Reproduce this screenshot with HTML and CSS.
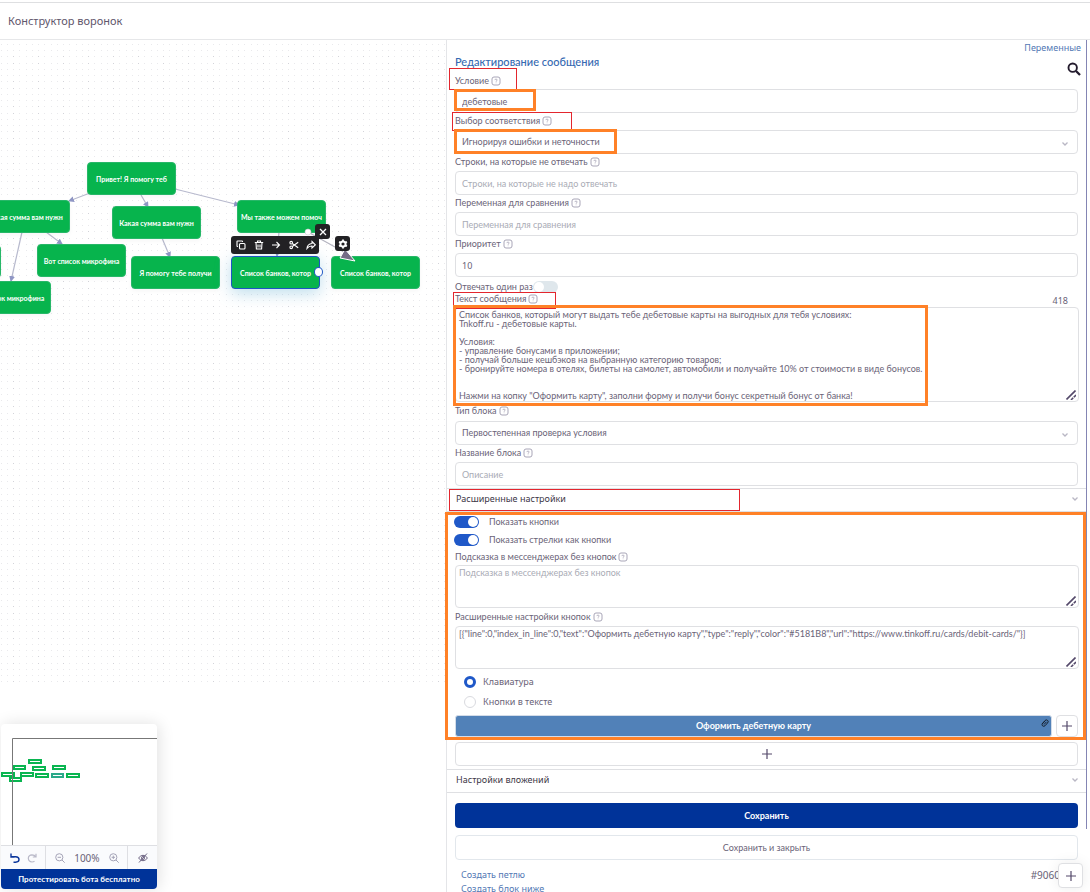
FILE: index.html
```html
<!DOCTYPE html>
<html lang="ru">
<head>
<meta charset="utf-8">
<title>Конструктор воронок</title>
<link rel="stylesheet" href="styles.css">
</head>
<body>
<svg class="sprite" aria-hidden="true">
  <symbol id="help" viewBox="0 0 10 10"><rect x="1" y="1" width="8" height="8" rx="2" fill="none" stroke="#a9a6b8"/><path d="M3.8 4.1q0-1 1.2-1t1.2.9q0 .6-1.1 1.2v.5M5.1 6.6v.6" fill="none" stroke="#a9a6b8" stroke-width=".8"/></symbol>
  <symbol id="chevron" viewBox="0 0 8 6"><path d="M1.5 1.5 4 4l2.500-2.500" fill="none" stroke="#b9b7c4" stroke-width="1.300"/></symbol>
  <symbol id="plus" viewBox="0 0 12 12"><path d="M6 1v10M1 6h10" stroke="#54496a" stroke-width="1.200"/></symbol>
  <symbol id="grip" viewBox="0 0 10 10"><path d="M.5 9.500 9.500.5M5 10l2.200-2.200M7.800 7.200 10 5" stroke="#54496a" stroke-width="1.600"/></symbol>
</svg>

<header class="topbar"><h1 class="topbar-title">Конструктор воронок</h1></header>

<main class="workspace">
  <section class="canvas" aria-label="Схема">
    <svg class="canvas-lines" aria-hidden="true">
      <defs>
        <pattern id="dots" width="25" height="25" patternUnits="userSpaceOnUse">
          <g fill="#e9e9ec">
            <path d="M1 4h1v1H1zM7 4h1v1H7zM13 4h1v1h-1zM19 4h1v1h-1zM1 10h1v1H1zM7 10h1v1H7zM13 10h1v1h-1zM19 10h1v1h-1zM1 16h1v1H1zM7 16h1v1H7zM19 16h1v1h-1zM1 23h1v1H1zM7 23h1v1H7zM19 23h1v1h-1z"/>
            <path fill="#d3d3d9" d="M13 16h1v1h-1zM13 23h1v1h-1z"/>
          </g>
        </pattern>
        <marker id="tip" markerUnits="userSpaceOnUse" markerWidth="6" markerHeight="6" refX="5" refY="3" orient="auto"><path d="M0 0 6 3 0 6z" fill="#8f96c4"/></marker>
      </defs>
      <rect width="100%" height="643" fill="url(#dots)"/>
      <g stroke="#b7b9cd" stroke-width="1.200">
        <path d="M90 153 69 161" marker-end="url(#tip)"/>
        <path d="M141 155 148 167" marker-end="url(#tip)"/>
        <path d="M175 149 239 165" marker-end="url(#tip)"/>
        <path d="M46 192 62 204" marker-end="url(#tip)"/>
        <path d="M22 192 11 241" marker-end="url(#tip)"/>
        <path d="M162 198 170 217" marker-end="url(#tip)"/>
        <path d="M279 192 277 216" marker-end="url(#tip)"/>
      </g>
    </svg>
    <div class="node n1">Привет! Я помогу теб</div>
    <div class="node n2">Какая сумма вам нужн</div>
    <div class="node n3">Какая сумма вам нужн</div>
    <div class="node n4">Вот список микрофина</div>
    <div class="node n5"></div>
    <div class="node n6">Вот список микрофина</div>
    <div class="node n7">Я помогу тебе получи</div>
    <div class="node n8">Мы также можем помоч</div>
    <div class="node n9 selected">Список банков, котор</div>
    <div class="node n10">Список банков, котор</div>
    <svg class="drag-line" viewBox="0 0 56 40" aria-hidden="true"><path d="M6 6 42 26" stroke="#b3b3bf" stroke-width="1.200"/><circle cx="6" cy="6" r="3" fill="#fff" stroke="#c9c9d2" stroke-width=".6"/><path d="M43 23 53 35 38 32z" fill="#756c86" stroke="#fff" stroke-width="1"/></svg>
    <div class="tools">
      <button class="tool" aria-label="Копировать"><svg viewBox="0 0 10 10"><rect x="3.500" y="3.500" width="5.500" height="5.500" rx="1"/><path d="M2 6.500H1.500q-.5 0-.5-.5V1.500Q1 1 1.500 1H6q.5 0 .5.500V2"/></svg></button>
      <button class="tool" aria-label="Удалить"><svg viewBox="0 0 10 10"><path d="M.8 2.500h8.400M3.500 2.500V1h3v1.500M2 2.500 2.400 9h5.200L8 2.500M4 4.500v3M6 4.500v3"/></svg></button>
      <button class="tool" aria-label="Стрелка"><svg viewBox="0 0 10 10"><path d="M1 5h7.500M5.500 2l3 3-3 3"/></svg></button>
      <button class="tool" aria-label="Вырезать"><svg viewBox="0 0 10 10"><circle cx="2.200" cy="2.700" r="1.300"/><circle cx="2.200" cy="7.300" r="1.300"/><path d="M3.300 3.500 9.200 7.800M3.300 6.500 9.200 2.200"/></svg></button>
      <button class="tool" aria-label="Переслать"><svg viewBox="0 0 10 10"><path d="M6 1.500 9.300 4.800 6 8V6Q3 5.800 1 8.500 1.300 4 6 3.500z"/></svg></button>
    </div>
    <button class="tool-box close" aria-label="Закрыть"><svg viewBox="0 0 10 10"><path d="m2 2 6 6M8 2 2 8" stroke="#fff" stroke-width="1.300"/></svg></button>
    <button class="tool-box gear" aria-label="Настройки"><svg viewBox="0 0 10 10"><circle cx="5" cy="5" r="2.600" fill="none" stroke="#fff" stroke-width="2"/><path d="M5 .5v2M5 7.500v2M1.100 2.800l1.700 1M7.200 6.200l1.700 1M8.900 2.800l-1.700 1M2.800 6.200l-1.700 1" stroke="#fff" stroke-width="1.800"/></svg></button>
    <span class="port"></span>

    <aside class="minimap">
      <svg class="map" aria-hidden="true">
        <g fill="#fff" stroke="#09b550" stroke-width="2">
          <path d="M29 36h12v3H29zM14 42h11v3H14zM33 43h12v3H33zM53 42h12v3H53zM2 49h12v3H2zM21 49h12v3H21zM36 50h12v3H36zM67 50h12v3H67zM10 54h11v3H10z"/>
          <path d="M52 50h11v3H52z" stroke="#2ba98a"/>
        </g>
        <path d="M12.500 122V14.500H157" fill="none" stroke="#777"/>
      </svg>
      <div class="zoombar">
        <div class="zb-group">
          <button class="icon-btn" aria-label="Отменить"><svg viewBox="0 0 10 10"><path d="M1 .5V4h3.500M1.200 3.800H5.500Q9 4 9 6.500T5.500 9.200H3.500" fill="none" stroke="#0b369b" stroke-width="1.400"/></svg></button>
          <button class="icon-btn" aria-label="Повторить"><svg viewBox="0 0 10 10"><path d="M9 .8V4H5.800M8.600 3.800Q7.500 1.800 5 1.800 1.500 2 1.300 5.300 1.500 8.800 5 9q1.500 0 2.500-.7" fill="none" stroke="#b9b9c8" stroke-width="1.200"/></svg></button>
        </div>
        <div class="zb-group wide">
          <button class="icon-btn" aria-label="Уменьшить"><svg viewBox="0 0 10 10"><g fill="none" stroke="#a5a4b7"><circle cx="4.300" cy="4.300" r="3.600"/><path d="m7 7 2.700 2.700M2.600 4.300H6"/></g></svg></button>
          <span class="zoom-value">100%</span>
          <button class="icon-btn" aria-label="Увеличить"><svg viewBox="0 0 10 10"><g fill="none" stroke="#a5a4b7"><circle cx="4.300" cy="4.300" r="3.600"/><path d="m7 7 2.700 2.700M2.600 4.300H6M4.300 2.600V6"/></g></svg></button>
        </div>
        <div class="zb-group">
          <button class="icon-btn" aria-label="Скрыть карту"><svg viewBox="0 0 10 10"><g fill="none" stroke="#6d6482"><path d="M.5 5Q5-.5 9.500 5 5 10.500.5 5zM1 9.500 9 .5"/><circle cx="5" cy="5" r="1.500"/></g></svg></button>
        </div>
      </div>
      <button class="test-btn">Протестировать бота бесплатно</button>
    </aside>
  </section>

  <section class="panel">
    <div class="panel-top">
      <h2 class="panel-title">Редактирование сообщения</h2>
      <div class="panel-links">
        <a class="link" href="#">Переменные</a>
        <button class="search" aria-label="Поиск"><svg viewBox="0 0 14 14"><circle cx="5.700" cy="5.700" r="4.200" fill="none" stroke="#231b2d" stroke-width="1.900"/><path d="m9 9 4 4" stroke="#231b2d" stroke-width="2.300"/></svg></button>
      </div>
    </div>

    <form class="form">
      <label class="label" for="f1">Условие <svg class="help"><use href="#help"/></svg></label>
      <input class="control" id="f1" value="дебетовые">
      <label class="label" for="f2">Выбор соответствия <svg class="help"><use href="#help"/></svg></label>
      <div class="select-wrap"><select class="control" id="f2"><option>Игнорируя ошибки и неточности</option></select><svg class="chevron"><use href="#chevron"/></svg></div>
      <label class="label" for="f3">Строки, на которые не отвечать <svg class="help"><use href="#help"/></svg></label>
      <input class="control" id="f3" placeholder="Строки, на которые не надо отвечать">
      <label class="label" for="f4">Переменная для сравнения <svg class="help"><use href="#help"/></svg></label>
      <input class="control" id="f4" placeholder="Переменная для сравнения">
      <label class="label" for="f5">Приоритет <svg class="help"><use href="#help"/></svg></label>
      <input class="control number" id="f5" value="10">
      <div class="once"><label for="f6">Отвечать один раз</label><input class="switch pale" type="checkbox" id="f6"></div>
      <div class="label-row"><label class="label" for="f7">Текст сообщения <svg class="help"><use href="#help"/></svg></label><span class="counter">418</span></div>
      <div class="area-wrap">
        <textarea class="area message" id="f7">Список банков, который могут выдать тебе дебетовые карты на выгодных для тебя условиях:
Tnkoff.ru - дебетовые карты.

Условия:
- управление бонусами в приложении;
- получай больше кешбэков на выбранную категорию товаров;
- бронируйте номера в отелях, билеты на самолет, автомобили и получайте 10% от стоимости в виде бонусов.


Нажми на копку "Оформить карту", заполни форму и получи бонус секретный бонус от банка!</textarea>
        <svg class="grip"><use href="#grip"/></svg>
      </div>
      <label class="label after-area" for="f8">Тип блока <svg class="help"><use href="#help"/></svg></label>
      <div class="select-wrap"><select class="control" id="f8"><option>Первостепенная проверка условия</option></select><svg class="chevron"><use href="#chevron"/></svg></div>
      <label class="label" for="f9">Название блока <svg class="help"><use href="#help"/></svg></label>
      <input class="control" id="f9" placeholder="Описание">
    </form>

    <button class="section-head">Расширенные настройки <svg class="chevron-s"><use href="#chevron"/></svg></button>

    <form class="form extra">
      <div class="switch-row"><input class="switch" type="checkbox" id="s1" checked><label for="s1">Показать кнопки</label></div>
      <div class="switch-row"><input class="switch" type="checkbox" id="s2" checked><label for="s2">Показать стрелки как кнопки</label></div>
      <label class="label" for="f10">Подсказка в мессенджерах без кнопок <svg class="help"><use href="#help"/></svg></label>
      <div class="area-wrap"><textarea class="area" id="f10" placeholder="Подсказка в мессенджерах без кнопок"></textarea><svg class="grip"><use href="#grip"/></svg></div>
      <label class="label after-area" for="f11">Расширенные настройки кнопок <svg class="help"><use href="#help"/></svg></label>
      <div class="area-wrap"><textarea class="area" id="f11">[{"line":0,"index_in_line":0,"text":"Оформить дебетную карту","type":"reply","color":"#5181B8","url":"https://www.tinkoff.ru/cards/debit-cards/"}]</textarea><svg class="grip"><use href="#grip"/></svg></div>
      <div class="radios">
        <label class="radio-row"><input class="radio" type="radio" name="kind" checked>Клавиатура</label>
        <label class="radio-row"><input class="radio" type="radio" name="kind">Кнопки в тексте</label>
      </div>
      <div class="key-row">
        <button type="button" class="key">Оформить дебетную карту<svg class="clip" viewBox="0 0 8 8"><path d="M1 5 4 1.500Q5.500.3 6.700 1.500T6.500 4L4 6.800Q2.700 7.800 1.500 6.800T1.700 4.500L4 2M3 5.500 5.500 2.800" fill="none" stroke="#16202e"/></svg></button>
        <button type="button" class="outline square" aria-label="Добавить кнопку"><svg class="plus"><use href="#plus"/></svg></button>
      </div>
      <button type="button" class="outline add-row" aria-label="Добавить ряд"><svg class="plus"><use href="#plus"/></svg></button>
    </form>

    <button class="section-head">Настройки вложений <svg class="chevron-s"><use href="#chevron"/></svg></button>

    <div class="actions">
      <button class="primary">Сохранить</button>
      <button class="outline secondary">Сохранить и закрыть</button>
      <div class="footer-row">
        <div class="footer-links"><a class="link" href="#">Создать петлю</a><a class="link" href="#">Создать блок ниже</a></div>
        <span class="block-id">#9060</span>
      </div>
    </div>

    <span class="rail"></span>
    <span class="mark red m1"></span><span class="mark orange m2"></span>
    <span class="mark red m3"></span><span class="mark orange m4"></span>
    <span class="mark red m5"></span><span class="mark orange m6"></span>
    <span class="mark red m7"></span><span class="mark orange m8"></span>
    <button class="fab" aria-label="Добавить"><svg class="plus"><use href="#plus"/></svg></button>
  </section>
</main>
</body>
</html>
```
FILE: styles.css
```css
* { box-sizing: border-box; }
html, body { height: 100%; }
body { margin: 0; display: flex; flex-direction: column; overflow: hidden; background: #fff; color: #6a6377; font: 9px/12px Lato, "Noto Sans", sans-serif; }
button, input, select, textarea { font: inherit; color: inherit; margin: 0; }
button { padding: 0; border: 0; background: none; cursor: pointer; }
.sprite { position: absolute; width: 0; height: 0; }
.topbar-title, .link, .section-head, .radio-row, .zoom-value, .counter, .number, .block-id { font-family: "Noto Sans", sans-serif; }

.topbar { flex: none; margin-top: 2px; padding: 10px 8px 11px; border-top: 1px solid #dedfe1; border-bottom: 1px solid #e6e7e9; }
.topbar-title { margin: 0; font-size: 11px; line-height: 15px; font-weight: 400; color: #5f566c; }

.workspace { flex: 1; min-height: 0; display: grid; grid-template-columns: 446fr 644fr; grid-template-rows: minmax(0, 1fr); overflow: hidden; }

.canvas { position: relative; overflow: hidden; }
.canvas-lines { position: absolute; inset: 0; width: 100%; height: 100%; }
.node { position: absolute; width: 89px; height: 33px; display: flex; align-items: center; justify-content: center; border: 1px solid #27b768; border-radius: 4px; background: #07b44d; color: #fff; font-size: 7px; line-height: 10px; font-weight: 700; white-space: nowrap; box-shadow: 0 2px 5px #0000000a; }
.n1 { left: 87px; top: 122px; }
.n2 { left: -19px; top: 160px; }
.n3 { left: 112px; top: 166px; }
.n4 { left: 37px; top: 204px; }
.n5 { left: -88px; top: 205px; }
.n6 { left: -38px; top: 241px; }
.n7 { left: 131px; top: 216px; }
.n8 { left: 237px; top: 160px; }
.n9 { left: 231px; top: 216px; }
.n10 { left: 331px; top: 216px; }
.selected { border: 1px solid #1d55c4; box-shadow: 0 4px 16px #58a9cf66; }
.drag-line { position: absolute; left: 302px; top: 186px; width: 56px; height: 40px; z-index: 1; }
.tools { position: absolute; left: 231px; top: 196px; width: 88px; height: 18px; padding: 0 3px 0 5px; display: flex; justify-content: space-between; align-items: center; border-radius: 3px; background: #222124; z-index: 1; }
.tool { display: flex; }
.tool svg { width: 10px; height: 10px; fill: none; stroke: #fff; stroke-width: 1.100; }
.tool-box { position: absolute; width: 15px; height: 15px; display: grid; place-items: center; border-radius: 3px; background: #222124; z-index: 1; }
.tool-box svg { width: 10px; height: 10px; }
.close { left: 315px; top: 184px; }
.gear { left: 335px; top: 196px; }
.port { position: absolute; left: 314px; top: 227px; width: 9px; height: 10px; border: 1px solid #1d55c4; border-radius: 50%; background: #fff; }

.minimap { position: absolute; left: 1px; bottom: 3px; width: 156px; border-radius: 4px; background: #fff; box-shadow: 2px 0 16px #0000001f; }
.map { display: block; width: 157px; height: 121px; margin-left: -1px; }
.zoombar { display: flex; height: 24px; border-top: 1px solid #dedfe3; background: #fafbfd; }
.zb-group { display: flex; flex: 45; align-items: center; justify-content: center; gap: 7px; }
.zb-group.wide { flex: 82; gap: 9px; border-left: 1px solid #dedfe3; border-right: 1px solid #dedfe3; }
.zb-group:last-child { flex: 29; }
.icon-btn { display: flex; }
.icon-btn svg { width: 10px; height: 10px; }
.zoom-value { font-size: 10px; }
.test-btn { display: block; width: 100%; height: 20px; border-radius: 0 0 4px 4px; background: #039; color: #fff; font-size: 8px; font-weight: 700; }

.panel { position: relative; border-left: 1px solid #e4e5e8; }
.panel-top { display: flex; justify-content: space-between; align-items: flex-start; height: 34px; padding: 0 9px 0 8px; }
.panel-title { margin: 15px 0 0; font-size: 11px; line-height: 14px; font-weight: 500; color: #3569b1; }
.panel-links { display: flex; flex-direction: column; align-items: flex-end; gap: 8px; padding-top: 1px; }
.link { font-size: 9px; line-height: 13px; color: #5278b4; text-decoration: none; }
.search { display: flex; }
.search svg { width: 14px; height: 14px; }

.form { display: flex; flex-direction: column; padding: 0 12px 0 8px; }
.label { display: flex; align-items: center; gap: 2px; height: 17px; padding-bottom: 1px; white-space: nowrap; }
.form > .label:first-child { height: 15px; }
.after-area { height: 19px; }
.help { width: 10px; height: 10px; }
.control { width: 100%; height: 24px; padding: 0 6px; border: 1px solid #dfe0e3; border-radius: 4px; background: #fff; line-height: 14px; outline: 0; }
.number { font-size: 9px; }
.control::placeholder, .area::placeholder { color: #a9abb5; opacity: 1; }
.select-wrap, .area-wrap { position: relative; display: flex; }
.select-wrap select { appearance: none; }
.chevron { position: absolute; right: 9px; top: 11px; width: 8px; height: 6px; }
.once { display: flex; align-items: center; height: 16px; padding-top: 4px; }
.switch { appearance: none; position: relative; width: 25px; height: 12px; border-radius: 6px; background: #1f58c8; }
.switch::after { content: ""; position: absolute; top: 1px; right: 1px; width: 10px; height: 10px; border-radius: 50%; background: #fff; }
.switch.pale { background: #dfe7ec; }
.switch.pale::after { right: 14px; }
.label-row { display: flex; justify-content: space-between; height: 15px; margin-top: -1px; }
.label-row .label { height: 15px; }
.counter { padding-right: 10px; font-size: 9px; line-height: 18px; }
.area-wrap { margin-right: -1px; }
.area { width: 100%; height: 43px; padding: 2px 3px; border: 1px solid #dfe0e3; border-radius: 4px; background: #fff; line-height: 9px; resize: none; outline: 0; overflow: hidden; }
.message { height: 95px; }
.grip { position: absolute; right: 3px; bottom: 2px; width: 10px; height: 10px; }

.section-head { display: flex; align-items: center; justify-content: space-between; width: calc(100% - 3px); height: 24px; margin-top: 2px; padding: 0 8px 2px 9px; border-top: 1px solid #dfe0e3; border-bottom: 1px solid #dfe0e3; font-size: 9px; color: #3d3747; }
.extra + .section-head { margin-top: 3px; }
.chevron-s { width: 8px; height: 6px; }
.extra { padding-top: 1px; }
.switch-row { display: flex; align-items: center; gap: 10px; height: 18px; margin-left: -1px; }
.extra .label { height: 16px; }
.extra .after-area { height: 18px; }
.radios { display: flex; flex-direction: column; padding: 3px 0 3px 9px; }
.radio-row { display: flex; align-items: center; gap: 7px; height: 20px; font-size: 9px; }
.radio { appearance: none; width: 12px; height: 12px; border: 1px solid #d9dadf; border-radius: 50%; background: #fff; }
.radio:checked { border: 3px solid #1f58c8; }
.key-row { display: flex; gap: 4px; }
.key { position: relative; flex: 1; height: 22px; border: 1px solid #d3dce8; border-radius: 3px; background: #5181b8; color: #fff; font-weight: 700; }
.clip { position: absolute; right: 2px; top: 3px; width: 8px; height: 8px; }
.outline { display: grid; place-items: center; border: 1px solid #dfe0e3; border-radius: 4px; background: #fff; }
.square { width: 22px; height: 22px; }
.plus { width: 12px; height: 12px; }
.add-row { height: 24px; margin-top: 5px; }

.actions { display: flex; flex-direction: column; padding: 10px 12px 0 8px; }
.primary { height: 25px; border-radius: 4px; background: #039; color: #fff; font-weight: 700; }
.secondary { height: 25px; margin-top: 7px; border-color: #e2e7ec; }
.footer-row { display: flex; justify-content: space-between; padding: 8px 18px 0 6px; }
.footer-links { display: flex; flex-direction: column; }
.footer-links .link { line-height: 14px; }
.block-id { font-size: 10px; line-height: 14px; }

.rail { position: absolute; right: 3px; top: 0; width: 1px; height: 789px; background: #8485b4; }
.mark { position: absolute; pointer-events: none; }
.red { border: 1px solid #e3262e; }
.orange { border: 3px solid #ff8127; }
.m1 { left: 2px; top: 28px; width: 68px; height: 22px; }
.m2 { left: 7px; top: 49px; width: 82px; height: 22px; }
.m3 { left: 5px; top: 72px; width: 120px; height: 19px; }
.m4 { left: 7px; top: 89px; width: 163px; height: 25px; }
.m5 { left: 6px; top: 252px; width: 103px; height: 17px; }
.m6 { left: 6px; top: 265px; width: 475px; height: 101px; }
.m7 { left: 2px; top: 449px; width: 291px; height: 22px; }
.m8 { left: -2px; right: 4px; top: 472px; height: 228px; }
.fab { position: absolute; right: 7px; bottom: 4px; width: 25px; height: 25px; display: grid; place-items: center; border: 1px solid #dfe0e3; border-radius: 4px; background: #fff; box-shadow: 0 0 14px #00000014; }
```
